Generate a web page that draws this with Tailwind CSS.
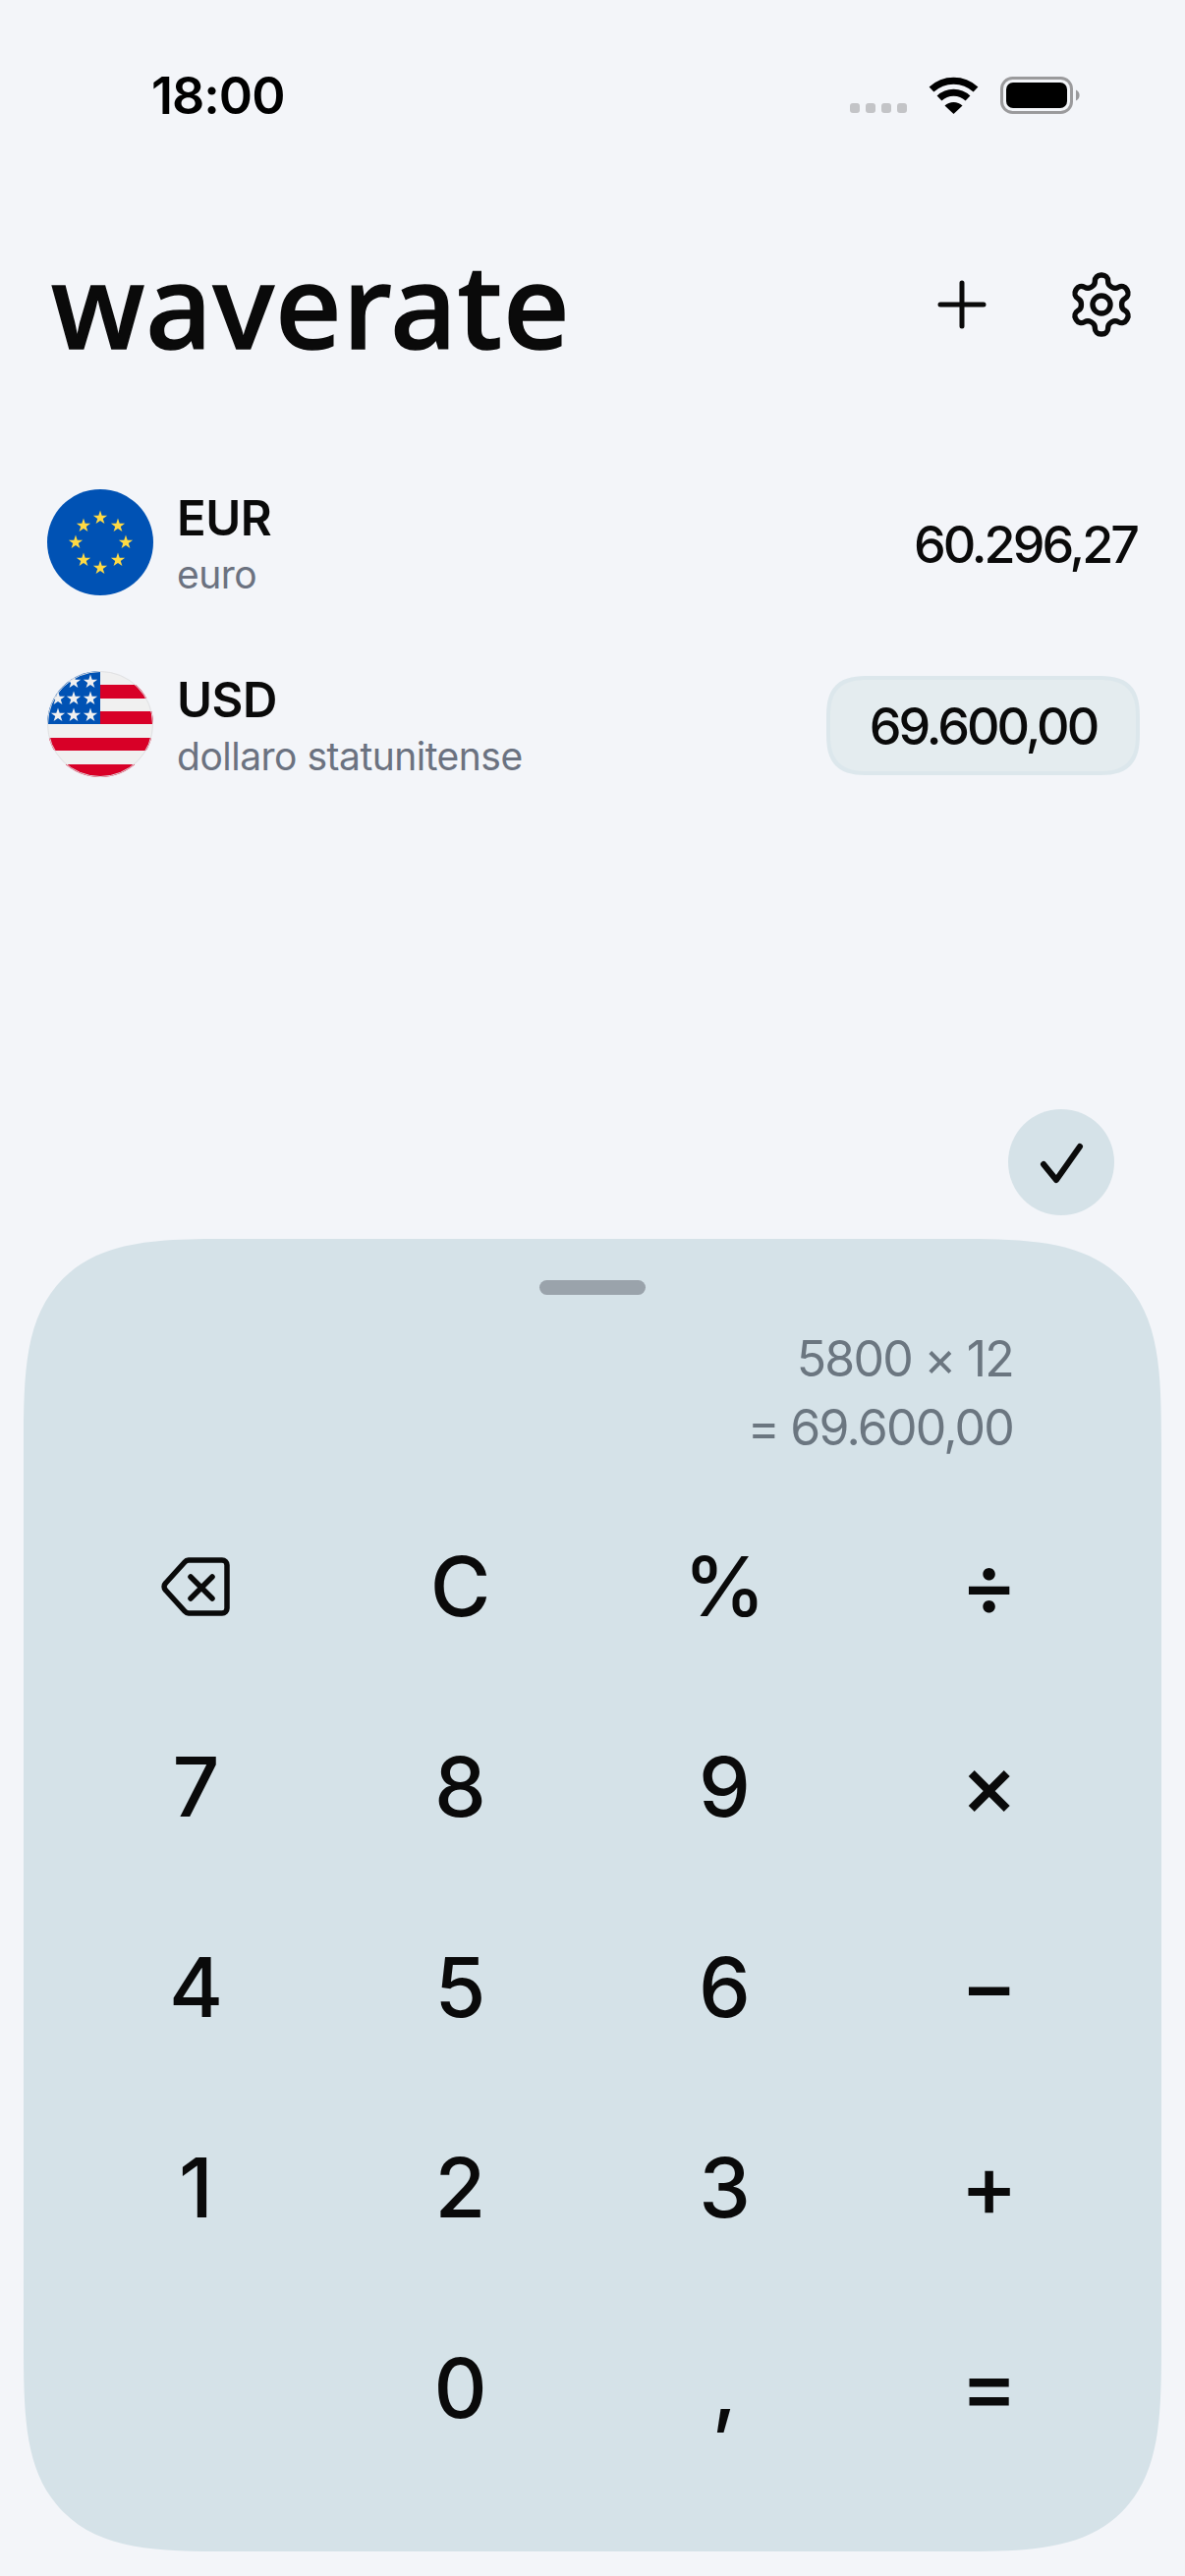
<!DOCTYPE html>
<html lang="it">
<head>
  <meta charset="UTF-8">
  <meta name="viewport" content="width=device-width, initial-scale=1.0">
  <title>waverate</title>
  <script src="https://cdn.jsdelivr.net/npm/@tailwindcss/browser@4"></script>
</head>
<body class="bg-[#f3f5f9] font-[Inter,sans-serif] text-[#0a0a0a]">
  <div class="w-[1206px] h-[2622px] flex flex-col overflow-hidden">

    <!-- status bar -->
    <div class="h-[194px] flex items-center justify-between pl-[154px] pr-[106px] text-black">
      <span class="mt-[2px] text-[52px] font-semibold tracking-[-1px] leading-none">18:00</span>
      <div class="flex items-end gap-[22px]">
        <div class="flex gap-[6px] mb-[1px]">
          <span class="w-[10px] h-[10px] rounded-[3px] bg-[#c3c4c7]"></span>
          <span class="w-[10px] h-[10px] rounded-[3px] bg-[#c3c4c7]"></span>
          <span class="w-[10px] h-[10px] rounded-[3px] bg-[#c3c4c7]"></span>
          <span class="w-[10px] h-[10px] rounded-[3px] bg-[#c3c4c7]"></span>
        </div>
        <svg width="51" height="38" viewBox="0 0 51 38" fill="none" stroke="black">
          <path d="M3 13A33 33 0 0 1 48 13" stroke-width="7"/>
          <path d="M11 22A21 21 0 0 1 40 22" stroke-width="7"/>
          <path d="M25.500 38L16.500 29.500A13 13 0 0 1 34.500 29.500Z" fill="black" stroke="none"/>
        </svg>
        <svg width="82" height="38" viewBox="0 0 82 38">
          <rect x="1.500" y="1.500" width="71" height="35" rx="11" fill="none" stroke="#9a9a9c" stroke-width="3"/>
          <rect x="6" y="6" width="62" height="26" rx="7" fill="black"/>
          <path d="M77 13.500A6 6 0 0 1 77 24.500Z" fill="#9a9a9c"/>
        </svg>
      </div>
    </div>

    <!-- header -->
    <div class="h-[130px] mt-[51px] flex items-center justify-between pl-[52px] pr-[49px]">
      <h1 class="font-['Noto_Sans',sans-serif] text-[118px] font-medium tracking-[1px] [-webkit-text-stroke:1.500px_#0a0a0a] leading-none">waverate</h1>
      <div class="flex items-center gap-[81px]">
        <svg width="50" height="50" viewBox="0 0 50 50" fill="none" stroke="#0a0a0a" stroke-width="5" stroke-linecap="round">
          <path d="M25 3V47M3 25H47"/>
        </svg>
        <svg width="72" height="72" viewBox="0 0 24 24" fill="none" stroke="#0a0a0a" stroke-width="1.800" stroke-linecap="round" stroke-linejoin="round">
          <path d="M12.220 2h-.44a2 2 0 0 0-2 2v.18a2 2 0 0 1-1 1.730l-.43.25a2 2 0 0 1-2 0l-.15-.08a2 2 0 0 0-2.730.73l-.22.38a2 2 0 0 0 .73 2.730l.15.1a2 2 0 0 1 1 1.720v.51a2 2 0 0 1-1 1.740l-.15.09a2 2 0 0 0-.73 2.730l.22.38a2 2 0 0 0 2.730.73l.15-.08a2 2 0 0 1 2 0l.43.25a2 2 0 0 1 1 1.730V20a2 2 0 0 0 2 2h.44a2 2 0 0 0 2-2v-.18a2 2 0 0 1 1-1.730l.43-.25a2 2 0 0 1 2 0l.15.08a2 2 0 0 0 2.730-.73l.22-.39a2 2 0 0 0-.73-2.730l-.15-.08a2 2 0 0 1-1-1.740v-.5a2 2 0 0 1 1-1.740l.15-.09a2 2 0 0 0 .73-2.730l-.22-.38a2 2 0 0 0-2.730-.73l-.15.08a2 2 0 0 1-2 0l-.43-.25a2 2 0 0 1-1-1.730V4a2 2 0 0 0-2-2z"/>
          <circle cx="12" cy="12" r="3"/>
        </svg>
      </div>
    </div>

    <!-- currencies -->
    <div class="mt-[123px] pl-[48px] pr-[46px] flex flex-col gap-[77px]">
      <div class="h-[108px] flex items-center">
        <svg class="shrink-0" width="108" height="108" viewBox="0 0 108 108">
          <defs>
            <polygon id="star" points="0,-7.500 1.700,-2.350 7.130,-2.320 2.760,.9 4.410,6.070 0,2.900 -4.410,6.070 -2.760,.9 -7.130,-2.320 -1.700,-2.350"/>
            <clipPath id="disc"><circle cx="54" cy="54" r="54"/></clipPath>
          </defs>
          <circle cx="54" cy="54" r="54" fill="#0052b4"/>
          <g fill="#ffda44">
            <use href="#star" x="54" y="29"/>
            <use href="#star" x="37" y="37"/>
            <use href="#star" x="72" y="37"/>
            <use href="#star" x="29" y="54"/>
            <use href="#star" x="80" y="54"/>
            <use href="#star" x="37" y="72"/>
            <use href="#star" x="72" y="72"/>
            <use href="#star" x="54" y="80"/>
          </g>
        </svg>
        <div class="ml-[24px] pt-[3px] flex-1 flex flex-col">
          <span class="text-[49px] font-[560] tracking-[-0.5px] leading-[58px]">EUR</span>
          <span class="mt-[5px] text-[39px] text-[#6b7280] tracking-[-0.5px] leading-[46px]">euro</span>
        </div>
        <span class="mt-[6px] mr-[3px] text-[52px] font-medium tracking-[-3px] leading-none">60.296,27</span>
      </div>
      <div class="h-[108px] flex items-center">
        <svg class="shrink-0" width="108" height="108" viewBox="0 0 108 108">
          <g clip-path="url(#disc)">
            <rect width="108" height="108" fill="#f0f0f0"/>
            <g fill="#d80027">
              <rect x="54" y="14" width="54" height="14"/>
              <rect x="54" y="41" width="54" height="13"/>
              <rect y="68" width="108" height="13"/>
              <rect y="95" width="108" height="13"/>
            </g>
            <rect width="54" height="54" fill="#0052b4"/>
            <g fill="#f0f0f0">
              <use href="#star" x="27" y="11"/>
              <use href="#star" x="44" y="11"/>
              <use href="#star" x="11" y="28"/>
              <use href="#star" x="27" y="28"/>
              <use href="#star" x="44" y="28"/>
              <use href="#star" x="11" y="45"/>
              <use href="#star" x="27" y="45"/>
              <use href="#star" x="44" y="45"/>
            </g>
          </g>
          <circle cx="54" cy="54" r="53.500" fill="none" stroke="#e0e1e4" stroke-width="1"/>
        </svg>
        <div class="ml-[24px] pt-[3px] flex-1 flex flex-col">
          <span class="text-[49px] font-[560] tracking-[-0.5px] leading-[58px]">USD</span>
          <span class="mt-[5px] text-[39px] text-[#6b7280] tracking-[-0.5px] leading-[46px]">dollaro statunitense</span>
        </div>
        <span class="mt-[3px] pt-[3px] w-[319px] h-[101px] flex items-center justify-center rounded-[44px] [corner-shape:superellipse(1.5)] bg-[#e4ecef] border-4 border-[#dce7ec] text-[52px] font-medium tracking-[-3px] leading-none">69.600,00</span>
      </div>
    </div>

    <!-- confirm -->
    <div class="mt-[338px] pr-[72px] flex justify-end">
      <div class="w-[108px] h-[108px] rounded-full bg-[#d5e2e8] flex items-center justify-center">
        <svg width="108" height="108" viewBox="0 0 108 108" fill="none" stroke="#0a0a0a" stroke-width="6" stroke-linecap="round" stroke-linejoin="round">
          <path d="M36 56L49 72L73 38"/>
        </svg>
      </div>
    </div>

    <!-- keypad -->
    <div class="mt-[24px] mx-[24px] h-[1336px] rounded-[210px] [corner-shape:superellipse(1.7)] bg-[#d5e2e8] px-[41px] pt-[42px] flex flex-col">
      <div class="w-[108px] h-[15px] mx-auto rounded-full bg-[#9aa3ab]"></div>
      <div class="mt-[30px] pr-[110px] text-right text-[#6b7680] text-[50px] tracking-[-1.800px] leading-[70px]">
        <div>5800 × 12</div>
        <div>= 69.600,00</div>
      </div>
      <div class="mt-[25px] grid grid-cols-4 auto-rows-[204px] text-[84px] font-[450] leading-none">
        <div class="flex items-center justify-center pr-[2px]">
          <svg width="70" height="60" viewBox="0 0 70 60" fill="none" stroke="#0a0a0a" stroke-width="5.500" stroke-linecap="round" stroke-linejoin="round">
            <path d="M28 3H62a5 5 0 0 1 5 5V52a5 5 0 0 1-5 5H28a6 6 0 0 1-4-2L4.500 33.500a5 5 0 0 1 0-7L24 5a6 6 0 0 1 4-2Z"/>
            <path d="M30 20L52 42M52 20L30 42"/>
          </svg>
        </div>
        <div class="flex items-center justify-center">C</div>
        <div class="flex items-center justify-center">%</div>
        <div class="flex items-center justify-center pb-[6px] text-[88px] font-medium">÷</div>
        <div class="flex items-center justify-center">7</div>
        <div class="flex items-center justify-center">8</div>
        <div class="flex items-center justify-center">9</div>
        <div class="flex items-center justify-center pb-[6px] text-[88px] font-medium">×</div>
        <div class="flex items-center justify-center">4</div>
        <div class="flex items-center justify-center">5</div>
        <div class="flex items-center justify-center">6</div>
        <div class="flex items-center justify-center pb-[6px] text-[88px] font-medium">−</div>
        <div class="flex items-center justify-center">1</div>
        <div class="flex items-center justify-center">2</div>
        <div class="flex items-center justify-center">3</div>
        <div class="flex items-center justify-center pb-[6px] text-[88px] font-medium">+</div>
        <div></div>
        <div class="flex items-center justify-center">0</div>
        <div class="flex items-center justify-center">,</div>
        <div class="flex items-center justify-center pb-[6px] text-[88px] font-medium">=</div>
      </div>
    </div>
  </div>
</body>
</html>
